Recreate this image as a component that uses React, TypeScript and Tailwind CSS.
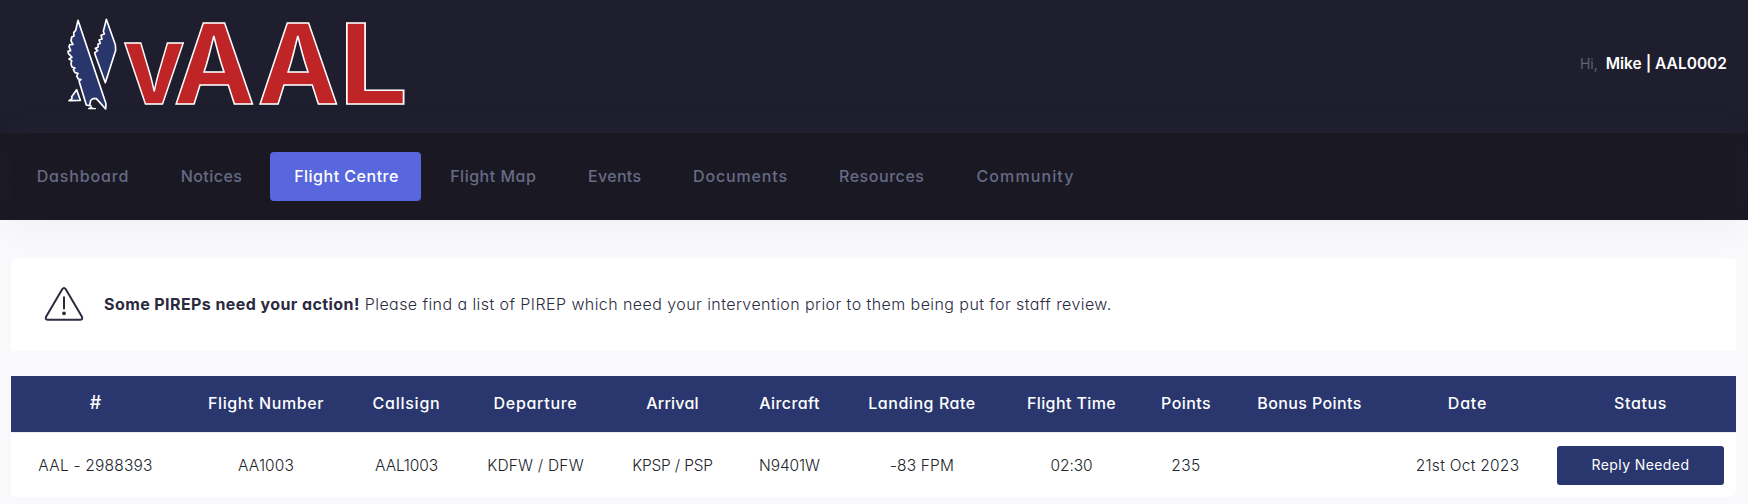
const navItems = [
  { label: "Dashboard", box: "w-[138px]", text: "tracking-[0.85px]" },
  { label: "Notices", box: "w-[109px]", text: "tracking-[0.45px]" },
  { label: "Flight Centre", box: "w-[151px]", text: "tracking-[0.5px]", active: true },
  { label: "Flight Map", box: "w-[132.5px]", text: "tracking-[0.5px]" },
  { label: "Events", box: "w-[100.5px]", text: "tracking-[0.3px]" },
  { label: "Documents", box: "w-[141px]", text: "tracking-[0.85px]" },
  { label: "Resources", box: "w-[131.5px]", text: "tracking-[0.55px]" },
  { label: "Community", box: "w-[146px]", text: "tracking-[1.1px]" },
];

const columns = [
  { head: "#", value: "AAL - 2988393", width: "w-[168px]", headText: "text-[18px]", valueText: "tracking-[0.22px]" },
  { head: "Flight Number", value: "AA1003", width: "w-[173px]", headText: "tracking-[0.6px]", valueText: "tracking-[0.1px]" },
  { head: "Callsign", value: "AAL1003", width: "w-[108px]", headText: "tracking-[0.75px]", valueText: "tracking-[-0.15px]" },
  { head: "Departure", value: "KDFW / DFW", width: "w-[150px]", headText: "tracking-[0.7px]", valueText: "tracking-[0.2px]" },
  { head: "Arrival", value: "KPSP / PSP", width: "w-[124px]", headText: "tracking-[0.25px]", valueText: "tracking-[-0.2px]" },
  { head: "Aircraft", value: "N9401W", width: "w-[110px]", headText: "tracking-[0.42px]", valueText: "tracking-[-0.1px]" },
  { head: "Landing Rate", value: "-83 FPM", width: "w-[155px]", headText: "tracking-[0.55px]", valueText: "tracking-[0.15px]" },
  { head: "Flight Time", value: "02:30", width: "w-[144px]", headText: "tracking-[0.4px]", valueText: "tracking-[-0.1px]" },
  { head: "Points", value: "235", width: "w-[85px]", headText: "tracking-[0.4px]", valueText: "tracking-[0.5px]" },
  { head: "Bonus Points", value: "", width: "w-[162px]", headText: "tracking-[0.4px]", valueText: "" },
  { head: "Date", value: "21st Oct 2023", width: "w-[154px]", headText: "tracking-[0.8px]", valueText: "tracking-[0.28px]" },
  { head: "Status", value: "action", width: "w-[192px]", headText: "tracking-[0.6px]", valueText: "" },
];

function Logo() {
  return (
    <svg className="block h-[133px] w-[350px]" viewBox="0 -10 350 133" aria-label="vAAL">
      <g transform="scale(0.33333)" fill="#29366c" stroke="#ffffff" strokeWidth="5" strokeLinejoin="round">
        <path d="M69 31 L153 281 L152 297 L135 278 L124 266 L114 266 L107 271 L104 287 L94 285 L72 213 L78 209 L70 207 L65 198 L69 190 L60 188 L55 179 L60 174 L51 171 L48 162 L50 152 L42 147 L51 142 L40 130 L39 124 L47 122 L42 110 L44 104 L54 103 L48 93 L50 81 L57 78 L56 68 L62 61 Z" />
        <path d="M154 28 L181 104 L182 121 L151 218 L120 133 L119 128 L128 122 L121 115 L129 112 L129 102 L136 100 L132 90 L141 87 L138 76 L148 72 L145 64 Z" />
        <path d="M65 239 L76 271 L42 272 L51 266 L50 260 Z" />
        <path fill="none" d="M108 285 L108 293 L101 296 L123 296 M108 293 L117 296" strokeWidth="4" />
      </g>
      <g
        className="font-['Inter',sans-serif] font-bold"
        fill="#bf2427"
        stroke="#ffffff"
        strokeWidth="1.5"
        fontSize="111"
      >
        <text transform="translate(68.2 94.2) scale(0.925 1)">v</text>
        <text transform="translate(118.5 94.2) scale(0.985 1)">A</text>
        <text transform="translate(202.5 94.2) scale(0.985 1)">A</text>
        <text transform="translate(283.7 94.2) scale(1.105 1)">L</text>
      </g>
    </svg>
  );
}

function WarningIcon() {
  return (
    <svg className="h-[38px] w-[42px] shrink-0" viewBox="0 0 42 38" fill="none" stroke="#2b2b40" strokeWidth="2">
      <path
        d="M19.2 3.3 Q21 .6 22.8 3.3 L38.8 30.5 Q40.2 33.8 37.5 33.8 H4.5 Q1.8 33.8 3.2 30.5 Z"
        strokeLinejoin="round"
      />
      <path d="M21 11.3 V22.5" strokeLinecap="round" />
      <circle cx="21" cy="27.3" r="1.9" fill="#2b2b40" stroke="none" />
    </svg>
  );
}

export default function App() {
  return (
    <div className="flex h-[504px] flex-col overflow-hidden bg-[#f9f9fc] font-['Inter',sans-serif] text-base [font-feature-settings:'cv11']">
      <header className="flex h-[133px] shrink-0 items-start justify-between bg-[#1f1e2e] pr-[21px] pl-[55px]">
        <Logo />
        <div className="flex items-baseline gap-[8px] pt-[52px] leading-6">
          <span className="text-sm text-[#636177]">Hi,</span>
          <span className="text-[15.5px] font-semibold text-white">Mike | AAL0002</span>
        </div>
      </header>

      <nav className="h-[87px] shrink-0 bg-[#1a1923] px-[11px]">
        <div className="flex h-full items-center gap-[5px] bg-[#1a1923] pl-[2px] shadow-[0_0_40px_0_rgba(82,81,105,0.07)]">
          {navItems.map((item) => (
            <a
              key={item.label}
              className={`flex h-[49px] items-center justify-center rounded pb-[2px] pl-[2px] font-medium whitespace-nowrap ${item.box} ${item.text} ${
                item.active ? "bg-[#5867dd] text-white" : "text-[#686a85]"
              }`}
            >
              {item.label}
            </a>
          ))}
        </div>
      </nav>

      <main className="flex flex-col gap-[25px] pt-[38px] pr-[12px] pl-[11px]">
        <section className="flex h-[93px] items-center rounded bg-white pl-[32px] text-[#2b2b40]">
          <WarningIcon />
          <p className="ml-[19px] pb-[2px] whitespace-nowrap">
            <strong className="font-bold tracking-[0.42px]">Some PIREPs need your action!</strong>
            <span className="font-light tracking-[0.43px]">
              {" "}
              Please find a list of PIREP which need your intervention prior to them being put for staff review.
            </span>
          </p>
        </section>

        <section className="overflow-hidden rounded-b-md bg-white">
          <table className="w-full table-fixed text-center whitespace-nowrap">
            <thead>
              <tr className="h-[56px] bg-[#2a376e] text-white">
                {columns.map((c) => (
                  <th key={c.head} className={`p-0 pb-[2px] pl-px font-medium ${c.width} ${c.headText}`}>
                    {c.head}
                  </th>
                ))}
              </tr>
            </thead>
            <tbody>
              <tr className="h-[65px] border-t border-[#ebedf2] text-[15.5px] font-light text-[#212529]">
                {columns.map((c) => (
                  <td key={c.head} className={`p-0 pt-px pl-px ${c.valueText}`}>
                    {c.value === "action" ? (
                      <button className="h-[39px] w-[167px] rounded-[3px] bg-[#2a376e] text-sm font-normal tracking-[0.4px] text-white">
                        Reply Needed
                      </button>
                    ) : (
                      c.value
                    )}
                  </td>
                ))}
              </tr>
            </tbody>
          </table>
        </section>
      </main>
    </div>
  );
}
